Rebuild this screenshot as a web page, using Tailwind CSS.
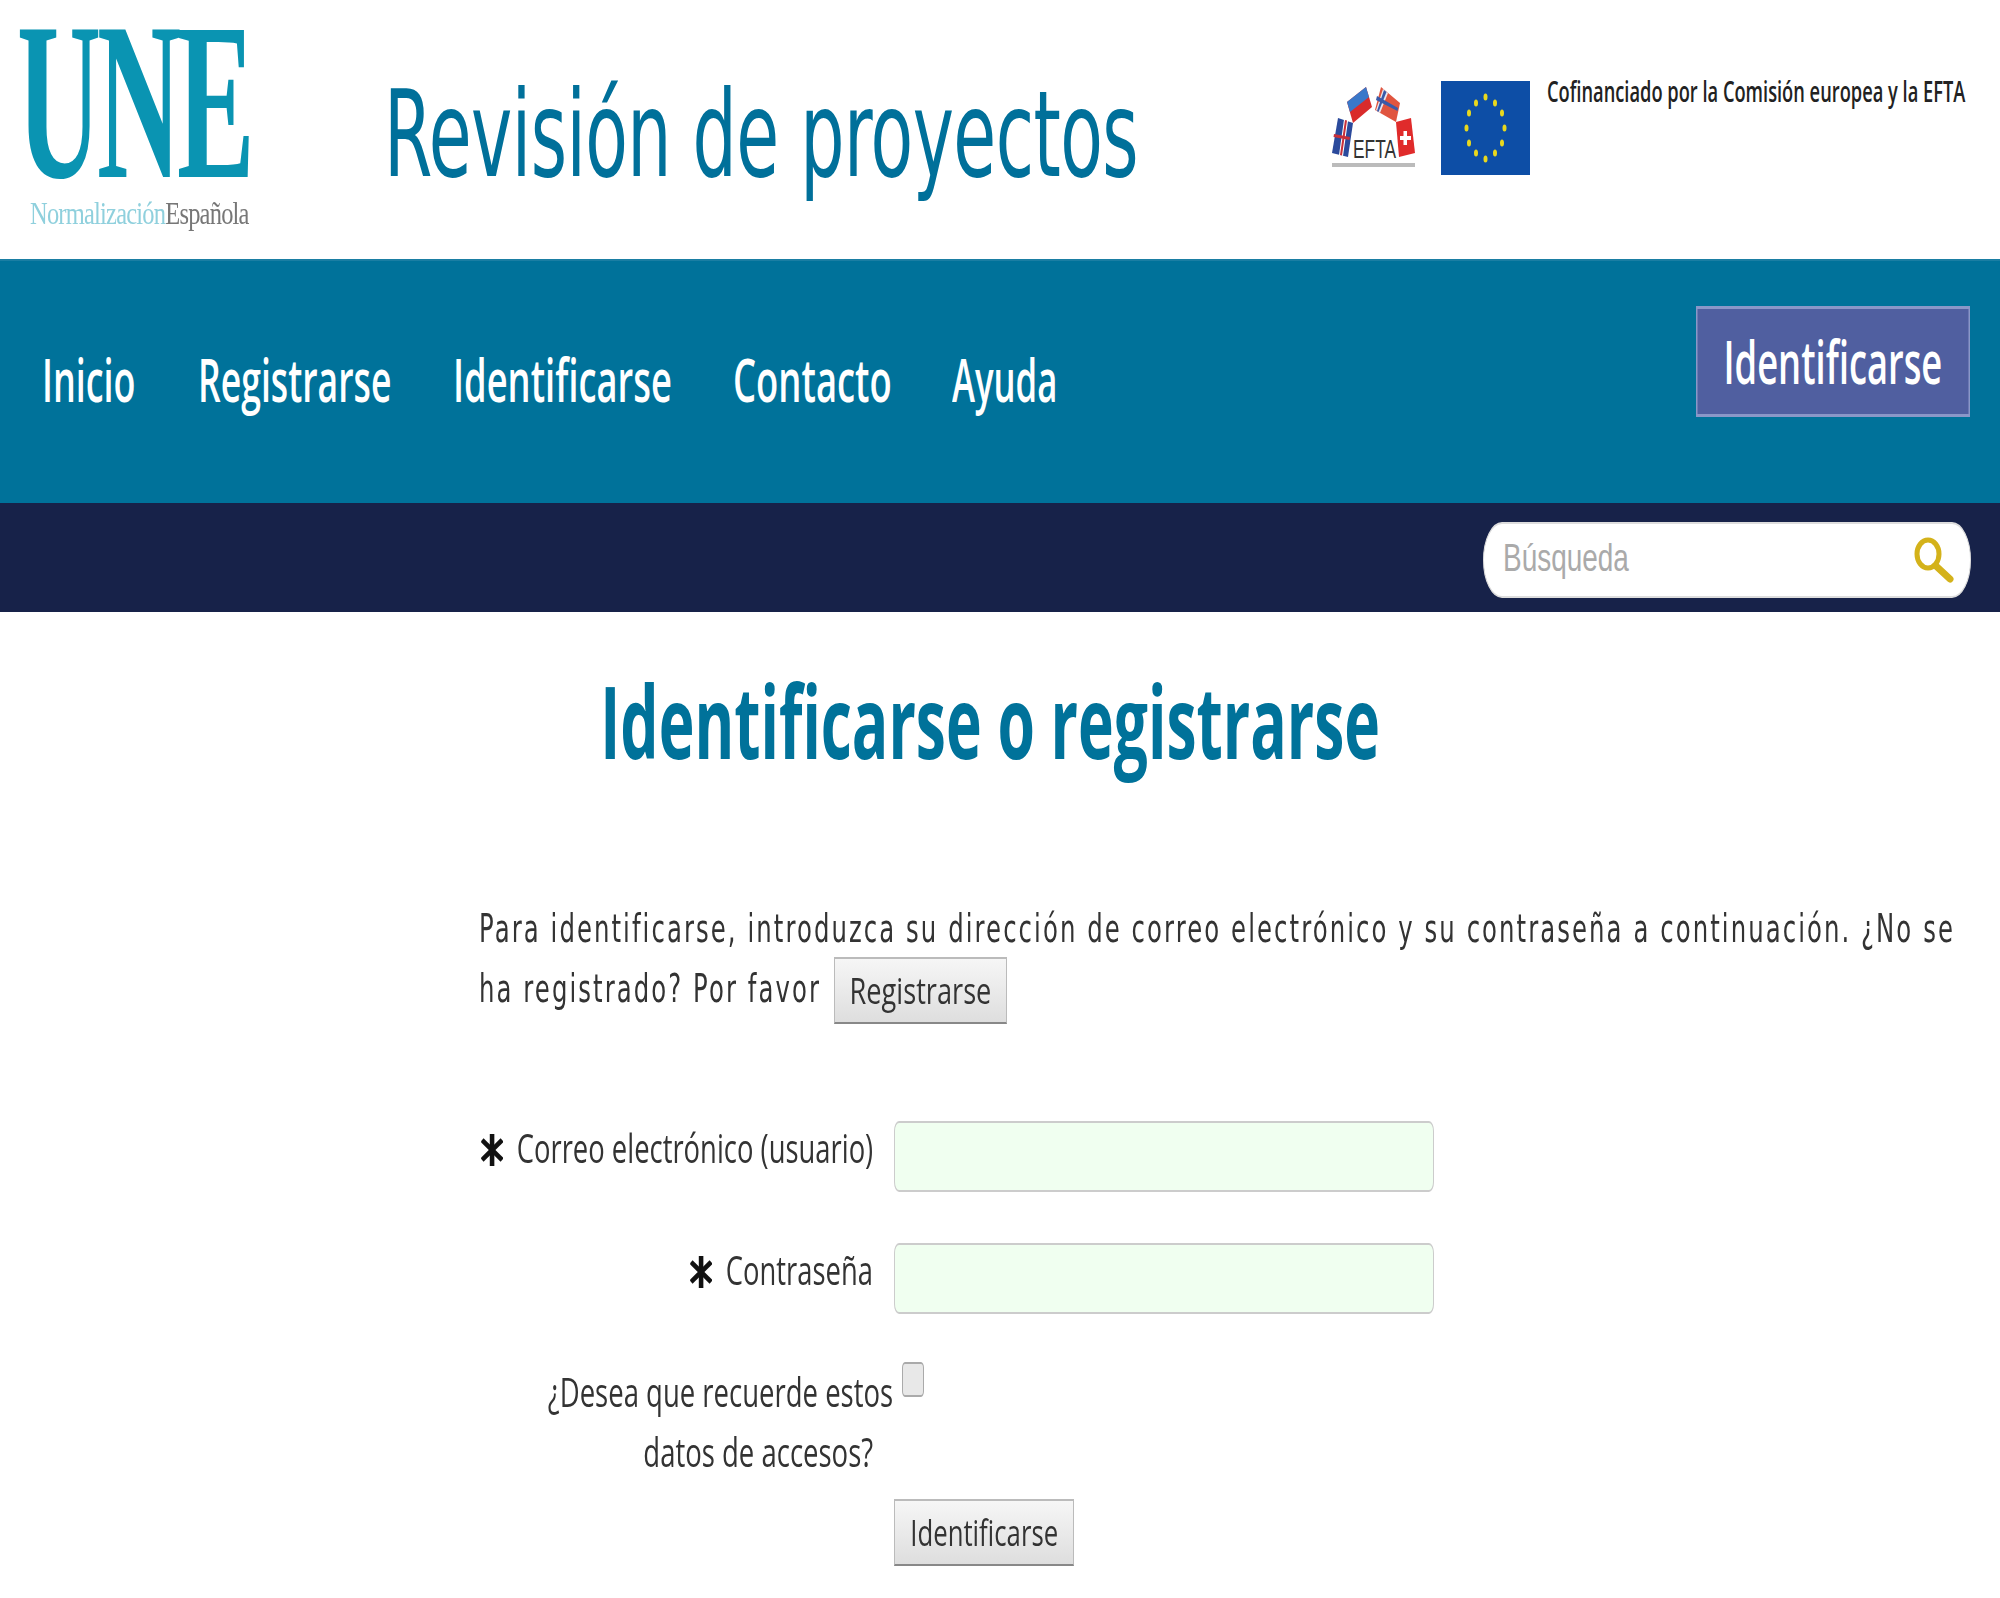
<!DOCTYPE html>
<html lang="es">
<head>
<meta charset="utf-8">
<title>Revisión de proyectos</title>
<script src="https://cdn.jsdelivr.net/npm/@tailwindcss/browser@4"></script>
</head>
<body class="bg-white">
<div class="w-[2000px] h-[1598px] overflow-hidden">
<div class="w-[4000px] h-[1598px] origin-top-left scale-x-50 font-['DejaVu_Sans',sans-serif] text-[#333]">

  <header class="h-[259px] flex items-start bg-white">
    <div class="w-[768px] pl-[34px] shrink-0">
      <div class="h-[196px] pt-[6px] font-['Liberation_Serif',serif] font-bold text-[225px] leading-[190px] tracking-[-8px] text-[#0a94b2] whitespace-nowrap"><span class="inline-block origin-left scale-x-[1.035]">UNE</span></div>
      <div class="pl-[26px] font-['Liberation_Serif',serif] text-[31px] leading-[36px] tracking-[-1px] whitespace-nowrap"><span class="inline-block origin-left scale-x-[1.58]"><span class="text-[#8fd0dd]">Normalización</span><span class="text-[#777]">Española</span></span></div>
    </div>
    <h1 class="w-[1892px] shrink-0 pt-[60px] text-[120px] leading-[150px] tracking-[-1px] text-[#00709a] whitespace-nowrap"><span class="inline-block origin-left scale-x-[1.163]">Revisión de proyectos</span></h1>
    <svg class="w-[170px] h-[90px] mt-[84px] shrink-0" viewBox="0 0 85 90" preserveAspectRatio="none">
      <polygon points="8,34 23,39 18,73 2,69" fill="#2b4a9c"/><polygon points="14,35.500 18,37 13,72 9,71" fill="#fff"/><polygon points="15,36 17,36.500 12,71.500 10,71" fill="#c8303a"/><polygon points="4,50 20,53 19.500,56 3.500,53" fill="#c8303a"/>
      <polygon points="36,3 42,23 23,39 17,18" fill="#d92b2b"/><polygon points="36,3 39,13 20,28 17,18" fill="#3a78c9"/>
      <polygon points="51,3 70,19 66,38 45,26" fill="#e0553f"/><polygon points="53,5 58,9 50,29 46,26" fill="#e8e8f0"/><polygon points="54,6 56.500,8 48.500,28 47,27" fill="#3a5aa8"/><polygon points="47,12 68,24 67.500,27 46,16" fill="#3a5aa8"/>
      <polygon points="66,38 81,34 85,69 69,73" fill="#e02b2b"/><rect x="73.500" y="47" width="3.500" height="14" fill="#fff"/><rect x="70" y="52" width="11" height="4" fill="#fff"/>
      <text x="23" y="74" font-family="Liberation Sans, sans-serif" font-size="25" textLength="43" lengthAdjust="spacingAndGlyphs" fill="#333">EFTA</text>
      <rect x="2" y="79" width="83" height="4" fill="#bbb"/>
    </svg>
    <svg class="w-[178px] h-[94px] mt-[81px] ml-[52px] shrink-0" viewBox="0 0 89 94" preserveAspectRatio="none">
      <rect width="89" height="94" fill="#0d4ea6"/>
      <g fill="#e8d81e">
        <ellipse cx="44.5" cy="16" rx="2" ry="3.500"/><ellipse cx="54" cy="22" rx="2" ry="3.500"/><ellipse cx="61" cy="32" rx="2" ry="3.500"/><ellipse cx="63.500" cy="47" rx="2" ry="3.500"/><ellipse cx="61" cy="62" rx="2" ry="3.500"/><ellipse cx="54" cy="72" rx="2" ry="3.500"/><ellipse cx="44.5" cy="78" rx="2" ry="3.500"/><ellipse cx="35" cy="72" rx="2" ry="3.500"/><ellipse cx="28" cy="62" rx="2" ry="3.500"/><ellipse cx="25.500" cy="47" rx="2" ry="3.500"/><ellipse cx="28" cy="32" rx="2" ry="3.500"/><ellipse cx="35" cy="22" rx="2" ry="3.500"/>
      </g>
    </svg>
    <p class="ml-[34px] pt-[71px] font-['Open_Sans',sans-serif] font-semibold text-[29px] leading-[40px] text-[#222] whitespace-nowrap"><span class="inline-block origin-left scale-x-[1.26]">Cofinanciado por la Comisión europea y la EFTA</span></p>
  </header>

  <nav class="h-[244px] bg-[#00729a] flex items-start justify-between pl-[84px] pr-[60px] border-t-2 border-[#1a7ea3]">
    <ul class="flex pt-[83px] font-['Open_Sans',sans-serif] font-semibold text-[59px] leading-[70px] text-white whitespace-nowrap">
      <li class="w-[312px]"><span class="inline-block origin-left scale-x-[1.217]">Inicio</span></li>
      <li class="w-[510px]"><span class="inline-block origin-left scale-x-[1.206]">Registrarse</span></li>
      <li class="w-[560px]"><span class="inline-block origin-left scale-x-[1.231]">Identificarse</span></li>
      <li class="w-[438px]"><span class="inline-block origin-left scale-x-[1.235]">Contacto</span></li>
      <li><span class="inline-block origin-left scale-x-[1.177]">Ayuda</span></li>
    </ul>
    <a class="mt-[45px] w-[548px] h-[111px] flex items-center justify-center bg-[#505fa0] border-[3px] border-[#8a97c8] font-['Open_Sans',sans-serif] font-semibold text-[59px] text-white whitespace-nowrap"><span class="inline-block scale-x-[1.231]">Identificarse</span></a>
  </nav>

  <div class="h-[109px] bg-[#172249] flex justify-end pr-[58px] pt-[19px]">
    <div class="w-[976px] h-[76px] rounded-[44px] bg-white border-2 border-[#ddd] flex items-center justify-between pl-[38px] pr-[32px]">
      <span class="-mt-[4px] font-['Liberation_Sans',sans-serif] text-[38px] text-[#aaa] whitespace-nowrap"><span class="inline-block origin-left scale-x-[1.47]">Búsqueda</span></span>
      <svg class="w-[80px] h-[46px]" viewBox="0 0 40 46" preserveAspectRatio="none"><ellipse cx="14" cy="17" rx="11" ry="14" fill="none" stroke="#d4b21a" stroke-width="5"/><line x1="22" y1="29" x2="36" y2="42" stroke="#d4b21a" stroke-width="7" stroke-linecap="round"/></svg>
    </div>
  </div>

  <main class="pt-[48px]">
    <h2 class="pr-[40px] text-center font-['Open_Sans',sans-serif] font-bold text-[100px] leading-[120px] text-[#00729a] whitespace-nowrap"><span class="inline-block scale-x-[1.21]">Identificarse o registrarse</span></h2>
    <div class="ml-[958px] mt-[119px] text-[39px] leading-[60px] tracking-[3.3px] whitespace-nowrap text-[#333]">
      <p class="origin-left scale-x-[1.25]">Para identificarse, introduzca su dirección de correo electrónico y su contraseña a continuación. ¿No se</p>
      <div class="flex items-start">
        <p class="w-[710px] shrink-0 origin-left scale-x-[1.25]">ha registrado? Por favor</p>
        <button class="w-[346px] h-[67px] -mt-[2px] border-2 border-[#bbb] border-b-[#888] bg-gradient-to-b from-[#f6f6f6] to-[#dedede] font-['Open_Sans',sans-serif] text-[36px] leading-[52px] tracking-normal text-[#333]"><span class="inline-block scale-x-[1.51]">Registrarse</span></button>
      </div>
    </div>

    <form class="mt-[97px] font-['Open_Sans',sans-serif] text-[40px] leading-[60px] text-[#333]">
      <div class="flex h-[122px]">
        <label class="w-[1746px] block text-right -mt-[3px] whitespace-nowrap">
          <span class="inline-flex gap-[20px] origin-right scale-x-[1.37]">
            <svg class="w-[32px] h-[32px] mt-[16px]" viewBox="0 0 24 32" preserveAspectRatio="none"><g stroke="#111" stroke-width="5"><line x1="12" y1="0" x2="12" y2="32"/><line x1="1" y1="6" x2="23" y2="26"/><line x1="23" y1="6" x2="1" y2="26"/></g></svg>
            <span>Correo electrónico (usuario)</span>
          </span>
        </label>
        <input class="ml-[42px] w-[1080px] h-[71px] bg-[#f0fff0] border-2 border-[#ccc] rounded-[10px]" type="text">
      </div>
      <div class="flex h-[122px]">
        <label class="w-[1746px] block text-right -mt-[3px] whitespace-nowrap">
          <span class="inline-flex gap-[20px] origin-right scale-x-[1.37]">
            <svg class="w-[32px] h-[32px] mt-[16px]" viewBox="0 0 24 32" preserveAspectRatio="none"><g stroke="#111" stroke-width="5"><line x1="12" y1="0" x2="12" y2="32"/><line x1="1" y1="6" x2="23" y2="26"/><line x1="23" y1="6" x2="1" y2="26"/></g></svg>
            <span>Contraseña</span>
          </span>
        </label>
        <input class="ml-[42px] w-[1080px] h-[71px] bg-[#f0fff0] border-2 border-[#ccc] rounded-[10px]" type="password">
      </div>
      <div class="flex h-[134px]">
        <label class="w-[1786px] flex flex-col items-end -mt-[3px] whitespace-nowrap">
          <span class="origin-right scale-x-[1.375]">¿Desea que recuerde estos</span>
          <span class="mr-[40px] origin-right scale-x-[1.375]">datos de accesos?</span>
        </label>
        <span class="block ml-[18px] w-[44px] h-[35px] -mt-[3px] rounded-[6px] bg-[#e8e8e8] border-2 border-[#aaa]"></span>
      </div>
      <button class="ml-[1788px] w-[360px] h-[67px] border-2 border-[#bbb] border-b-[#888] bg-gradient-to-b from-[#f6f6f6] to-[#dedede] text-[36px] leading-[54px] text-[#333]" type="button"><span class="inline-block scale-x-[1.43]">Identificarse</span></button>
    </form>
  </main>
</div>
</div>
</body>
</html>
